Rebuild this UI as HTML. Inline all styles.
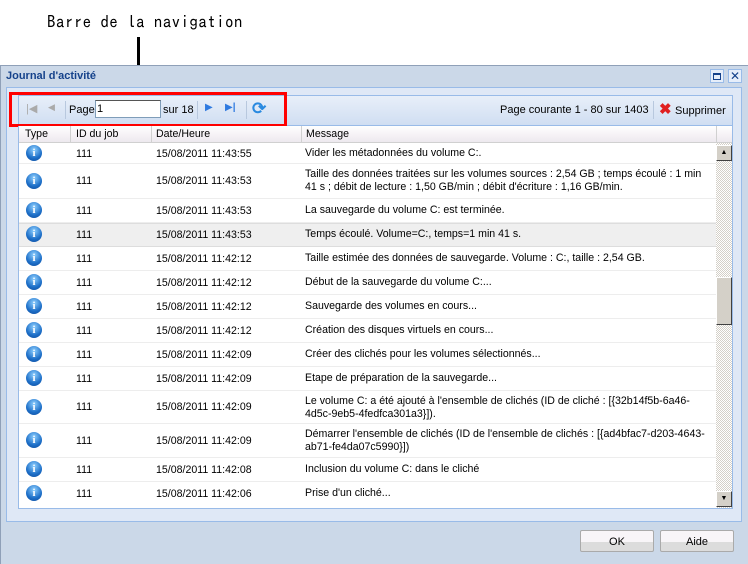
<!DOCTYPE html>
<html><head><meta charset="utf-8"><style>
*{margin:0;padding:0;box-sizing:border-box}
body{width:748px;height:564px;background:#fff;position:relative;overflow:hidden;font-family:"Liberation Sans",sans-serif;font-size:11px;color:#000}
.a{position:absolute}
.win{left:0;top:65px;width:748px;height:499px;background:#cbd8e8;border-top:1px solid #8fa0b8;border-left:1px solid #8fa0b8}
.title{left:6px;top:70px;font-weight:bold;color:#15428b;font-size:11px}
.inner{left:6px;top:87px;width:736px;height:435px;background:#dfe8f6;border:1px solid #99bbe8}
.tb{left:18px;top:95px;width:715px;height:31px;background:linear-gradient(#e8eff9,#d0def2);border:1px solid #99bbe8}
.grid{left:18px;top:126px;width:715px;height:383px;background:#fff;border:1px solid #99bbe8;border-top:none;overflow:hidden;font-size:10.6px}
.hdr{left:0;top:0;width:713px;height:17px;background:linear-gradient(#fff,#f7f3f7 50%,#ede9ef);border-bottom:1px solid #d0d0d0}
.hdr div{position:absolute;top:2px}
.hs{position:absolute;top:0;width:1px;height:17px;background:#d0d0d0}
.row{position:absolute;left:0;width:697px;border-bottom:1px solid #ededed}
.row div{position:absolute}
.ic{width:16px;height:16px;border-radius:50%;background:radial-gradient(circle at 50% 30%,#8fd0ff,#1d6fc8 60%,#0d4a9a);left:7px;color:#fff;font-weight:bold;font-size:11px;text-align:center;line-height:16px;font-family:"Liberation Serif",serif}
.sb{left:697px;top:17px;width:16px;height:366px;background:repeating-conic-gradient(#d4d0c8 0 25%,#fff 0 50%) 0 0/2px 2px}
.btn{background:#d4d0c8;border:1px solid;border-color:#fff #404040 #404040 #fff}
.bb{width:74px;height:22px;top:530px;border:1px solid #aaa;border-radius:2px;background:linear-gradient(#f8f5f8 55%,#dcdcdc 55%);text-align:center;line-height:22px;font-size:11px}
.w{width:405px;line-height:13px}
</style></head><body>
<div class="a" style="left:47px;top:14px;font-family:'IPAGothic','Liberation Sans',sans-serif;font-size:17px;letter-spacing:0.4px">Barre de la navigation</div>
<div class="a" style="left:137px;top:37px;width:3px;height:56px;background:#000"></div>
<div class="a win"></div>
<div class="a title">Journal d'activité</div>
<div class="a" style="left:710px;top:69px;width:14px;height:14px;border:1px solid #99bbe8;background:#e6eefa"><div class="a" style="left:2px;top:3px;width:8px;height:7px;border:1px solid #15428b;border-top-width:2px"></div></div>
<div class="a" style="left:728px;top:69px;width:14px;height:14px;border:1px solid #99bbe8;background:#e6eefa;color:#15428b;font-size:12px;line-height:12px;text-align:center">✕</div>
<div class="a inner"></div>
<div class="a tb">
<div class="a" style="left:7px;top:6px;color:#aaa;font-size:11px">|◀</div>
<div class="a" style="left:29px;top:6px;color:#aaa;font-size:9px">◀</div>
<div class="a" style="left:46px;top:5px;width:1px;height:18px;background:#b8c8de"></div>
<div class="a" style="left:50px;top:8px">Page</div>
<div class="a" style="left:76px;top:4px;width:66px;height:18px;background:#fff;border:1px solid #7f9db9;border-top-color:#555;padding-left:1px;line-height:16px">1</div>
<div class="a" style="left:144px;top:8px">sur 18</div>
<div class="a" style="left:178px;top:5px;width:1px;height:18px;background:#b8c8de"></div>
<div class="a" style="left:186px;top:6px;color:#2f7ae0;font-size:10px">▶</div>
<div class="a" style="left:206px;top:6px;color:#2f7ae0;font-size:10px">▶<span style="font-weight:bold">|</span></div>
<div class="a" style="left:227px;top:5px;width:1px;height:18px;background:#b8c8de"></div>
<div class="a" style="left:233px;top:3px;color:#2a8ae0;font-size:17px;font-weight:bold">⟳</div>
<div class="a" style="left:481px;top:8px">Page courante 1 - 80 sur 1403</div>
<div class="a" style="left:634px;top:5px;width:1px;height:18px;background:#b8c8de"></div>
<div class="a" style="left:640px;top:4px;color:#e02020;font-size:15px;font-weight:bold">✖</div>
<div class="a" style="left:656px;top:9px">Supprimer</div>
</div>
<div class="a" style="left:9px;top:92px;width:278px;height:35px;border:3px solid #f00"></div>
<div class="a grid">
<div class="a hdr">
<div style="left:6px">Type</div><div style="left:57px">ID du job</div><div style="left:137px">Date/Heure</div><div style="left:287px">Message</div>
<span class="hs" style="left:51px"></span><span class="hs" style="left:132px"></span><span class="hs" style="left:282px"></span><span class="hs" style="left:697px"></span>
</div>
<div class="row" style="top:17px;height:21px"><div class="ic" style="top:2px">i</div><div style="left:57px;top:5px">111</div><div style="left:137px;top:5px">15/08/2011 11:43:55</div><div style="left:286px;top:4px">Vider les métadonnées du volume C:.</div></div>
<div class="row" style="top:38px;height:35px"><div class="ic" style="top:9px">i</div><div style="left:57px;top:11px">111</div><div style="left:137px;top:11px">15/08/2011 11:43:53</div><div class="w" style="left:286px;top:4px">Taille des données traitées sur les volumes sources : 2,54 GB ; temps écoulé : 1 min 41 s ; débit de lecture : 1,50 GB/min ; débit d'écriture : 1,16 GB/min.</div></div>
<div class="row" style="top:73px;height:24px"><div class="ic" style="top:3px">i</div><div style="left:57px;top:6px">111</div><div style="left:137px;top:6px">15/08/2011 11:43:53</div><div style="left:286px;top:5px">La sauvegarde du volume C: est terminée.</div></div>
<div class="row" style="top:97px;height:24px;background:#efefef;border-bottom-color:#ddd;border-top:1px solid #ddd"><div class="ic" style="top:2px">i</div><div style="left:57px;top:5px">111</div><div style="left:137px;top:5px">15/08/2011 11:43:53</div><div style="left:286px;top:4px">Temps écoulé. Volume=C:, temps=1 min 41 s.</div></div>
<div class="row" style="top:121px;height:24px"><div class="ic" style="top:3px">i</div><div style="left:57px;top:6px">111</div><div style="left:137px;top:6px">15/08/2011 11:42:12</div><div style="left:286px;top:5px">Taille estimée des données de sauvegarde. Volume : C:, taille : 2,54 GB.</div></div>
<div class="row" style="top:145px;height:24px"><div class="ic" style="top:3px">i</div><div style="left:57px;top:6px">111</div><div style="left:137px;top:6px">15/08/2011 11:42:12</div><div style="left:286px;top:5px">Début de la sauvegarde du volume C:...</div></div>
<div class="row" style="top:169px;height:24px"><div class="ic" style="top:3px">i</div><div style="left:57px;top:6px">111</div><div style="left:137px;top:6px">15/08/2011 11:42:12</div><div style="left:286px;top:5px">Sauvegarde des volumes en cours...</div></div>
<div class="row" style="top:193px;height:24px"><div class="ic" style="top:3px">i</div><div style="left:57px;top:6px">111</div><div style="left:137px;top:6px">15/08/2011 11:42:12</div><div style="left:286px;top:5px">Création des disques virtuels en cours...</div></div>
<div class="row" style="top:217px;height:24px"><div class="ic" style="top:3px">i</div><div style="left:57px;top:6px">111</div><div style="left:137px;top:6px">15/08/2011 11:42:09</div><div style="left:286px;top:5px">Créer des clichés pour les volumes sélectionnés...</div></div>
<div class="row" style="top:241px;height:24px"><div class="ic" style="top:3px">i</div><div style="left:57px;top:6px">111</div><div style="left:137px;top:6px">15/08/2011 11:42:09</div><div style="left:286px;top:5px">Etape de préparation de la sauvegarde...</div></div>
<div class="row" style="top:265px;height:33px"><div class="ic" style="top:8px">i</div><div style="left:57px;top:10px">111</div><div style="left:137px;top:10px">15/08/2011 11:42:09</div><div class="w" style="left:286px;top:4px">Le volume C: a été ajouté à l'ensemble de clichés (ID de cliché : [{32b14f5b-6a46-4d5c-9eb5-4fedfca301a3}]).</div></div>
<div class="row" style="top:298px;height:34px"><div class="ic" style="top:8px">i</div><div style="left:57px;top:11px">111</div><div style="left:137px;top:11px">15/08/2011 11:42:09</div><div class="w" style="left:286px;top:4px">Démarrer l'ensemble de clichés (ID de l'ensemble de clichés : [{ad4bfac7-d203-4643-ab71-fe4da07c5990}])</div></div>
<div class="row" style="top:332px;height:24px"><div class="ic" style="top:3px">i</div><div style="left:57px;top:6px">111</div><div style="left:137px;top:6px">15/08/2011 11:42:08</div><div style="left:286px;top:5px">Inclusion du volume C: dans le cliché</div></div>
<div class="row" style="top:356px;height:26px;border:none"><div class="ic" style="top:3px">i</div><div style="left:57px;top:6px">111</div><div style="left:137px;top:6px">15/08/2011 11:42:06</div><div style="left:286px;top:5px">Prise d'un cliché...</div></div>
<div class="a sb">
<div class="a btn" style="left:0;top:2px;width:16px;height:16px;font-size:7px;text-align:center;line-height:13px">▲</div>
<div class="a btn" style="left:0;top:134px;width:16px;height:48px"></div>
<div class="a btn" style="left:0;top:348px;width:16px;height:16px;font-size:7px;text-align:center;line-height:13px">▼</div>
</div>
</div>
<div class="a bb" style="left:580px">OK</div>
<div class="a bb" style="left:660px">Aide</div>
</body></html>
